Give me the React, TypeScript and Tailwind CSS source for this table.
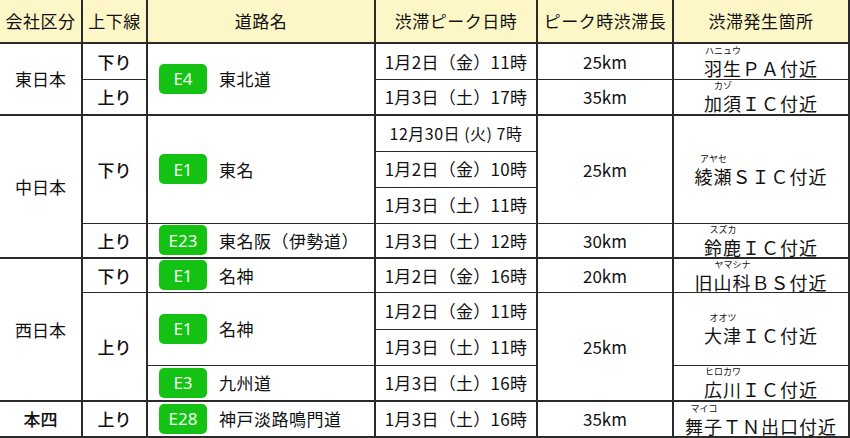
import type { ReactNode } from 'react'

type TdProps = {
  children?: ReactNode
  rs?: number
  first?: boolean
  b2?: boolean
  className?: string
}

function Td({ children, rs, first, b2, className = '' }: TdProps) {
  const l = first ? 'border-l-0' : 'border-l-2'
  const b = b2 ? 'border-b-2' : 'border-b'
  return (
    <td
      rowSpan={rs}
      className={`${l} ${b} border-t border-r-2 border-[#2a2a2a] p-0 text-center align-middle ${className}`}
    >
      {children}
    </td>
  )
}

function Badge({ code }: { code: string }) {
  return (
    <span className="inline-flex h-[30px] w-[48px] shrink-0 items-center justify-center rounded-[5px] bg-[#14c214] font-['Noto_Sans',sans-serif] text-[17px] text-[#f4fff4]">
      {code}
    </span>
  )
}

function Road({ code, name }: { code: string; name: string }) {
  return (
    <div className="flex items-center gap-3 pl-[11px] text-left">
      <Badge code={code} />
      <span className="text-[17px] tracking-[0.5px]">{name}</span>
    </div>
  )
}

function Date({ children }: { children: ReactNode }) {
  return <span className="text-[17px] tracking-[0.3px]">{children}</span>
}

function Km({ children }: { children: ReactNode }) {
  return <span className="text-[17px]">{children}</span>
}

function Place({ pre, base, kana, post }: { pre?: string; base: string; kana: string; post: string }) {
  return (
    <div className="flex items-end justify-center text-[18px] leading-none tracking-[1px]">
      {pre && <span>{pre}</span>}
      <span className="flex flex-col items-center gap-[4px]">
        <span className="text-[9px] leading-none tracking-normal">{kana}</span>
        <span>{base}</span>
      </span>
      <span>{post}</span>
    </div>
  )
}

function Dir({ children, rs, b2 }: { children: ReactNode; rs?: number; b2?: boolean }) {
  return (
    <Td rs={rs} b2={b2} className="text-[17px] font-medium">
      {children}
    </Td>
  )
}

const headers = ['会社区分', '上下線', '道路名', '渋滞ピーク日時', 'ピーク時渋滞長', '渋滞発生箇所']

export default function App() {
  return (
    <div className="h-[438px] w-[850px] bg-white font-['Noto_Sans_CJK_JP','Noto_Sans',sans-serif] text-[#111]">
      <table className="w-[849px] table-fixed border-collapse">
        <colgroup>
          <col className="w-[82px]" />
          <col className="w-[65px]" />
          <col className="w-[228px]" />
          <col className="w-[162px]" />
          <col className="w-[136px]" />
          <col className="w-[176px]" />
        </colgroup>
        <thead>
          <tr className="h-[43px] bg-[#fdf7c8]">
            {headers.map((h, i) => (
              <th
                key={h}
                className={`${i === 0 ? 'border-l-0' : 'border-l-2'} border-t-0 border-b-2 border-r-2 border-[#2a2a2a] p-0 text-center align-middle text-[17px] font-normal tracking-[0.5px]`}
              >
                {h}
              </th>
            ))}
          </tr>
        </thead>
        <tbody>
          {/* 東日本 */}
          <tr className="h-[36px]">
            <Td rs={2} first b2>
              <span className="text-[17px]">東日本</span>
            </Td>
            <Dir>下り</Dir>
            <Td rs={2} b2>
              <Road code="E4" name="東北道" />
            </Td>
            <Td>
              <Date>1月2日（金）11時</Date>
            </Td>
            <Td>
              <Km>25km</Km>
            </Td>
            <Td>
              <Place base="羽生" kana="ハニュウ" post="ＰＡ付近" />
            </Td>
          </tr>
          <tr className="h-[36px]">
            <Dir b2>上り</Dir>
            <Td b2>
              <Date>1月3日（土）17時</Date>
            </Td>
            <Td b2>
              <Km>35km</Km>
            </Td>
            <Td b2>
              <Place base="加須" kana="カゾ" post="ＩＣ付近" />
            </Td>
          </tr>

          {/* 中日本 */}
          <tr className="h-[36px]">
            <Td rs={4} first b2>
              <span className="text-[17px]">中日本</span>
            </Td>
            <Dir rs={3}>下り</Dir>
            <Td rs={3}>
              <Road code="E1" name="東名" />
            </Td>
            <Td>
              <span className="text-[16px] tracking-[0.5px]">12月30日 (火) 7時</span>
            </Td>
            <Td rs={3}>
              <Km>25km</Km>
            </Td>
            <Td rs={3}>
              <Place base="綾瀬" kana="アヤセ" post="ＳＩＣ付近" />
            </Td>
          </tr>
          <tr className="h-[36px]">
            <Td>
              <Date>1月2日（金）10時</Date>
            </Td>
          </tr>
          <tr className="h-[36px]">
            <Td>
              <Date>1月3日（土）11時</Date>
            </Td>
          </tr>
          <tr className="h-[35px]">
            <Dir b2>上り</Dir>
            <Td b2>
              <Road code="E23" name="東名阪（伊勢道）" />
            </Td>
            <Td b2>
              <Date>1月3日（土）12時</Date>
            </Td>
            <Td b2>
              <Km>30km</Km>
            </Td>
            <Td b2>
              <Place base="鈴鹿" kana="スズカ" post="ＩＣ付近" />
            </Td>
          </tr>

          {/* 西日本 */}
          <tr className="h-[34px]">
            <Td rs={4} first b2>
              <span className="text-[17px]">西日本</span>
            </Td>
            <Dir>下り</Dir>
            <Td>
              <Road code="E1" name="名神" />
            </Td>
            <Td>
              <Date>1月2日（金）16時</Date>
            </Td>
            <Td>
              <Km>20km</Km>
            </Td>
            <Td>
              <Place pre="旧" base="山科" kana="ヤマシナ" post="ＢＳ付近" />
            </Td>
          </tr>
          <tr className="h-[37px]">
            <Dir rs={3} b2>上り</Dir>
            <Td rs={2}>
              <Road code="E1" name="名神" />
            </Td>
            <Td>
              <Date>1月2日（金）11時</Date>
            </Td>
            <Td rs={3} b2>
              <Km>25km</Km>
            </Td>
            <Td rs={2}>
              <Place base="大津" kana="オオツ" post="ＩＣ付近" />
            </Td>
          </tr>
          <tr className="h-[36px]">
            <Td>
              <Date>1月3日（土）11時</Date>
            </Td>
          </tr>
          <tr className="h-[36px]">
            <Td b2>
              <Road code="E3" name="九州道" />
            </Td>
            <Td b2>
              <Date>1月3日（土）16時</Date>
            </Td>
            <Td b2>
              <Place base="広川" kana="ヒロカワ" post="ＩＣ付近" />
            </Td>
          </tr>

          {/* 本四 */}
          <tr className="h-[36px]">
            <Td first b2>
              <span className="text-[17px] font-medium">本四</span>
            </Td>
            <Dir b2>上り</Dir>
            <Td b2>
              <Road code="E28" name="神戸淡路鳴門道" />
            </Td>
            <Td b2>
              <Date>1月3日（土）16時</Date>
            </Td>
            <Td b2>
              <Km>35km</Km>
            </Td>
            <Td b2>
              <Place base="舞子" kana="マイコ" post="ＴＮ出口付近" />
            </Td>
          </tr>
        </tbody>
      </table>
    </div>
  )
}
